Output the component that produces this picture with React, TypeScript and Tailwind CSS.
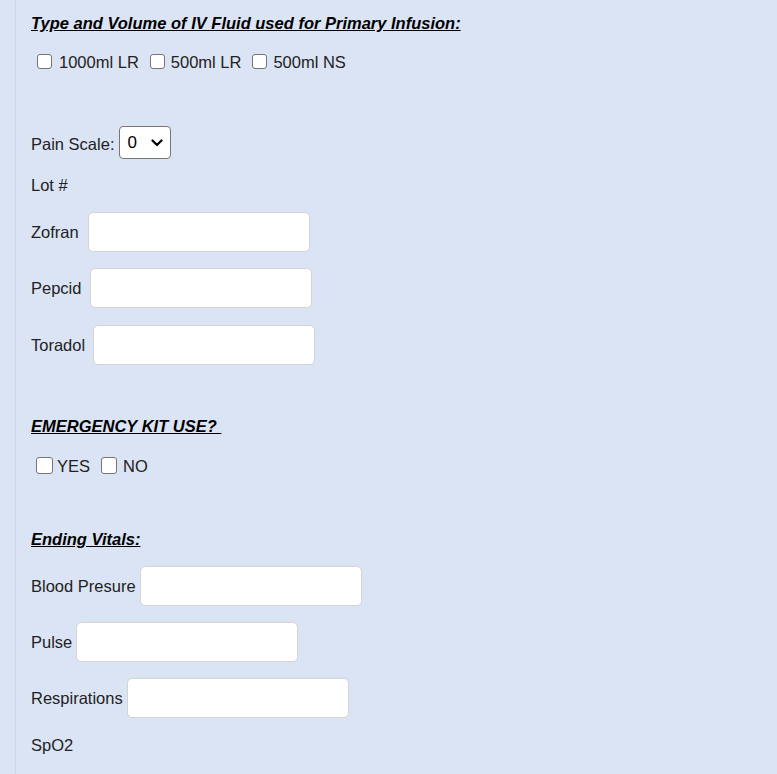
import React from "react";

function Box({ w, h }: { w: number; h: number }) {
  return (
    <span
      className="block shrink-0 rounded-[3px] border border-[#767676] bg-white"
      style={{ width: w, height: h }}
    />
  );
}

function Field({ label, gap }: { label: string; gap: number }) {
  return (
    <div className="flex items-center">
      <span>{label}</span>
      <div
        className="h-[40px] w-[222px] rounded-[5px] border border-[#d4d4d4] bg-white"
        style={{ marginLeft: gap }}
      />
    </div>
  );
}

export default function App() {
  return (
    <div
      className="min-h-screen bg-[#dbe4f4] pl-[15px] text-[16.5px] text-[#222]"
      style={{ fontFamily: '"Liberation Sans", Arial, sans-serif' }}
    >
      <div className="min-h-screen border-l border-[#cdd6e6] pl-[15px] pb-[20px]">
        <p className="pt-[14px] leading-[18px] font-bold italic underline text-black">
          Type and Volume of IV Fluid used for Primary Infusion:
        </p>
        <div className="mt-[19px] flex h-[20px] items-center pl-[6px]">
          <Box w={15} h={15} />
          <span className="ml-[7px] pt-[2px]">1000ml LR</span>
          <span className="ml-[11px] flex"><Box w={15} h={15} /></span>
          <span className="ml-[6px] pt-[2px]">500ml LR</span>
          <span className="ml-[11px] flex"><Box w={15} h={15} /></span>
          <span className="ml-[6px] pt-[2px]">500ml NS</span>
        </div>

        <div className="mt-[55px] flex items-center">
          <span className="pt-[3px]">Pain Scale:</span>
          <div className="ml-[5px] flex h-[33px] w-[52px] items-center justify-between rounded-[4px] border border-[#767676] bg-white pl-[7px] pr-[7px] text-black">
            <span className="text-[17px]">0</span>
            <svg width="12" height="8" viewBox="0 0 12 8" fill="none">
              <path d="M1.5 1.5 L6 6 L10.5 1.5" stroke="#000" strokeWidth="2.2" strokeLinecap="round" strokeLinejoin="round" />
            </svg>
          </div>
        </div>

        <p className="mt-[17px] leading-[18px]">Lot #</p>

        <div className="mt-[18px]"><Field label="Zofran" gap={9} /></div>
        <div className="mt-[16px]"><Field label="Pepcid" gap={9} /></div>
        <div className="mt-[17px]"><Field label="Toradol" gap={8} /></div>

        <p className="mt-[52px] leading-[18px] font-bold italic underline text-black whitespace-pre">
          {"EMERGENCY KIT USE? "}
        </p>
        <div className="mt-[20px] flex h-[20px] items-center pl-[5px]">
          <Box w={17} h={17} />
          <span className="ml-[4px] pt-[3px]">YES</span>
          <span className="ml-[11px] flex"><Box w={16} h={17} /></span>
          <span className="ml-[6px] pt-[3px]">NO</span>
        </div>

        <p className="mt-[55px] leading-[18px] font-bold italic underline text-black">
          Ending Vitals:
        </p>

        <div className="mt-[18px]"><Field label="Blood Presure" gap={4} /></div>
        <div className="mt-[16px]"><Field label="Pulse" gap={4} /></div>
        <div className="mt-[16px]"><Field label="Respirations" gap={4} /></div>

        <p className="mt-[18px] leading-[18px]">SpO2</p>
      </div>
    </div>
  );
}
